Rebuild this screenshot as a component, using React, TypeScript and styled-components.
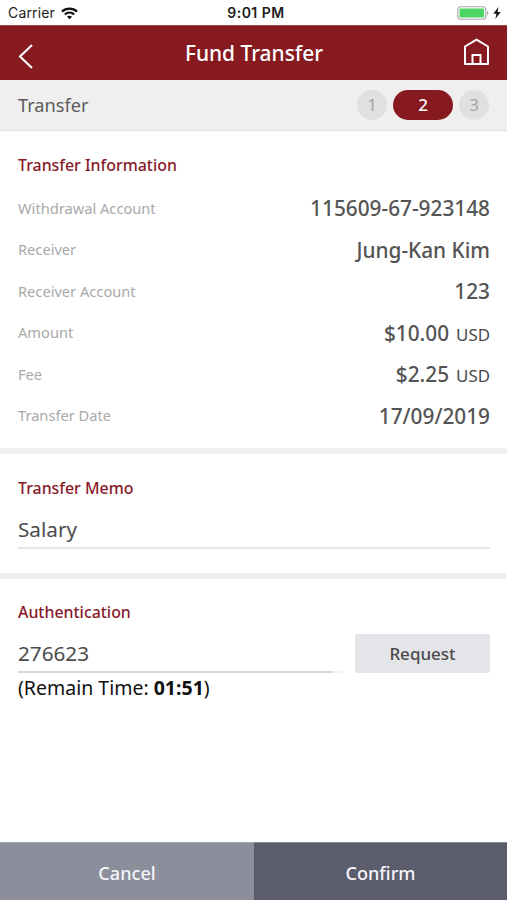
import React from "react";
import styled, { createGlobalStyle } from "styled-components";

const GlobalStyle = createGlobalStyle`
  * { box-sizing: border-box; }
  body { margin: 0; background: #fff; }
  button, input { font: inherit; border: 0; padding: 0; background: none; border-radius: 0; outline: 0; }
`;

const Screen = styled.div`
  width: 100%;
  height: 900px;
  display: flex;
  flex-direction: column;
  overflow: hidden;
  background: #fff;
  color: #4b4b4b;
  font-family: "Noto Sans", sans-serif;
  white-space: nowrap;
`;

const StatusBar = styled.div`
  height: 25px;
  flex: none;
  display: grid;
  grid-template-columns: 1fr auto 1fr;
  align-items: center;
  padding: 1px 6px 0 8px;
  color: #1c1c1c;
  font: 400 14px/24px Inter, sans-serif;
`;

const Carrier = styled.div`
  display: flex;
  align-items: center;
  gap: 6px;
  letter-spacing: 0.15px;
`;

const Clock = styled.div`
  font-weight: 600;
  font-size: 14px;
  letter-spacing: 0.5px;
  padding-left: 3px;
`;

const Power = styled.div`
  display: flex;
  align-items: center;
  justify-content: flex-end;
  gap: 4px;
`;

const Header = styled.header`
  height: 55px;
  flex: none;
  display: grid;
  grid-template-columns: 1fr auto 1fr;
  align-items: center;
  padding: 0 17px 0 18px;
  background: #871a20;
  border-top: 1px solid #9f4b50;
  color: #fff;
`;

const Title = styled.h1`
  margin: 0;
  font-size: 20.9px;
  line-height: 54px;
  font-weight: 500;
`;

const IconButton = styled.button<{ $end?: boolean }>`
  display: flex;
  justify-self: ${(p) => (p.$end ? "end" : "start")};
  color: inherit;
  padding-top: ${(p) => (p.$end ? 0 : 6)}px;
  padding-bottom: ${(p) => (p.$end ? 2 : 0)}px;
`;

const StepBar = styled.div`
  height: 51px;
  flex: none;
  display: flex;
  align-items: center;
  justify-content: space-between;
  padding: 0 18px 1px;
  background: #efefef;
  border-top: 1px solid #f7f2f2;
  border-bottom: 1px solid #e2e2e2;
  color: #5c5c5c;
  font-size: 18.2px;
`;

const Steps = styled.div`
  display: flex;
  gap: 6px;
`;

const Step = styled.span<{ $active?: boolean }>`
  width: ${(p) => (p.$active ? 60 : 30)}px;
  height: 30px;
  border-radius: 15px;
  background: ${(p) => (p.$active ? "#871a20" : "#e0e0e0")};
  color: ${(p) => (p.$active ? "#fff" : "#a5a5a5")};
  font-size: 17px;
  font-weight: ${(p) => (p.$active ? 500 : 400)};
  line-height: 29px;
  text-align: center;
`;

const Section = styled.section<{ $height: number; $last?: boolean }>`
  height: ${(p) => p.$height}px;
  flex: none;
  padding: ${(p) => (p.$last ? 21 : 22)}px 17px 0 18px;
  border-bottom: ${(p) => (p.$last ? 0 : 6)}px solid #efefef;
`;

const Heading = styled.h2`
  margin: 0;
  font-size: 15.9px;
  line-height: 24px;
  font-weight: 500;
  color: #871a2a;
`;

const Details = styled.dl`
  margin: 10px 0 0;
`;

const Row = styled.div`
  height: 41.5px;
  display: flex;
  align-items: center;
  justify-content: space-between;
`;

const Label = styled.dt`
  font-size: 14.65px;
  color: #a9a9a9;
`;

const Value = styled.dd`
  margin: 0;
  padding-top: 1px;
  color: #545454;
  font-size: 20.8px;
  font-weight: 500;
`;

const Currency = styled.span`
  margin-left: 7px;
  color: #4b4b4b;
  font-size: 16.9px;
  font-weight: 400;
`;

const Field = styled.input<{ $code?: boolean }>`
  display: block;
  width: 100%;
  height: 39px;
  color: #4b4b4b;
  font-size: 20.7px;
  border-bottom: 2px solid #e4e4e4;
  ${(p) =>
    p.$code &&
    "border-image: linear-gradient(to right, #d8d8d8 315px, #f5f5f5 317px) 0 0 2 0;"}
`;

const MemoBox = styled.div`
  margin-top: 10px;
`;

const AuthRow = styled.div`
  display: grid;
  grid-template-columns: 1fr 135px;
  column-gap: 12px;
  margin-top: 10px;
`;

const Request = styled.button`
  height: 39px;
  border-radius: 2px;
  background: #e4e5e8;
  color: #4b4b4b;
  font-size: 17px;
  font-weight: 500;
`;

const Remaining = styled.p`
  margin: 1px 0 0;
  color: #111;
  font-size: 19.5px;
  line-height: 28px;
`;

const Footer = styled.footer`
  height: 58px;
  flex: none;
  margin-top: auto;
  display: grid;
  grid-template-columns: 254px 1fr;
`;

const Action = styled.button<{ $primary?: boolean }>`
  background: ${(p) => (p.$primary ? "#5c5d6c" : "#8c8e9b")};
  border-top: 1px solid ${(p) => (p.$primary ? "#8b8b96" : "#a6a7b0")};
  color: #f5f5fa;
  font-size: 18.1px;
  font-weight: 500;
  padding-top: 2px;
`;

const details: { label: string; value: string; currency?: string }[] = [
  { label: "Withdrawal Account", value: "115609-67-923148" },
  { label: "Receiver", value: "Jung-Kan Kim" },
  { label: "Receiver Account", value: "123" },
  { label: "Amount", value: "$10.00", currency: "USD" },
  { label: "Fee", value: "$2.25", currency: "USD" },
  { label: "Transfer Date", value: "17/09/2019" },
];

const WifiIcon = () => (
  <svg width="17" height="13" viewBox="0 0 17 13" fill="none" stroke="#111" strokeWidth="2.3">
    <path d="M1 4.6C5.2.7 11.8.7 16 4.6" />
    <path d="M3.8 7.5C6.5 5 10.5 5 13.2 7.5" />
    <path d="M5.9 9.7C7.4 8.3 9.6 8.3 11.1 9.7L8.5 12.3Z" fill="#111" stroke="none" />
  </svg>
);

const BatteryIcon = () => (
  <svg width="32" height="14" viewBox="0 0 32 14">
    <rect x="0.75" y="0.75" width="28" height="12.5" rx="3" fill="#fff" stroke="#a9a9ab" strokeWidth="1.2" />
    <rect x="2.5" y="2.5" width="24.5" height="9" rx="1" fill="#4cd662" />
    <path d="M30 5v4q1.5-.5 1.5-2T30 5Z" fill="#a9a9ab" />
  </svg>
);

const BoltIcon = () => (
  <svg width="8" height="12" viewBox="0 0 8 12">
    <path d="M5.5 0 .3 6.8H3.5L2.3 12 7.7 4.9H4.5Z" fill="#111" />
  </svg>
);

const BackIcon = () => (
  <svg width="16" height="26" viewBox="0 0 16 26" fill="none" stroke="currentColor" strokeWidth="2.1">
    <path d="M14 2 2 13.5 14 25" />
  </svg>
);

const HomeIcon = () => (
  <svg width="27" height="28" viewBox="0 0 27 28" fill="none" stroke="currentColor" strokeWidth="2">
    <path d="M2 8.5 13.5 1.7 25 8.5V26H2Z" strokeLinejoin="round" />
    <path d="M9.5 26V17h8v9" />
  </svg>
);

export default function App() {
  return (
    <Screen>
      <GlobalStyle />
      <StatusBar>
        <Carrier>Carrier <WifiIcon /></Carrier>
        <Clock>9:01 PM</Clock>
        <Power><BatteryIcon /><BoltIcon /></Power>
      </StatusBar>
      <Header>
        <IconButton aria-label="Back"><BackIcon /></IconButton>
        <Title>Fund Transfer</Title>
        <IconButton $end aria-label="Home"><HomeIcon /></IconButton>
      </Header>
      <StepBar>
        <span>Transfer</span>
        <Steps>
          <Step>1</Step>
          <Step $active>2</Step>
          <Step>3</Step>
        </Steps>
      </StepBar>
      <Section $height={323}>
        <Heading>Transfer Information</Heading>
        <Details>
          {details.map((d) => (
            <Row key={d.label}>
              <Label>{d.label}</Label>
              <Value>
                {d.value}
                {d.currency && <Currency>{d.currency}</Currency>}
              </Value>
            </Row>
          ))}
        </Details>
      </Section>
      <Section $height={125}>
        <Heading>Transfer Memo</Heading>
        <MemoBox>
          <Field defaultValue="Salary" aria-label="Transfer memo" />
        </MemoBox>
      </Section>
      <Section $height={150} $last>
        <Heading>Authentication</Heading>
        <AuthRow>
          <Field $code defaultValue="276623" aria-label="Authentication code" />
          <Request>Request</Request>
        </AuthRow>
        <Remaining>(Remain Time: <b>01:51</b>)</Remaining>
      </Section>
      <Footer>
        <Action>Cancel</Action>
        <Action $primary>Confirm</Action>
      </Footer>
    </Screen>
  );
}
